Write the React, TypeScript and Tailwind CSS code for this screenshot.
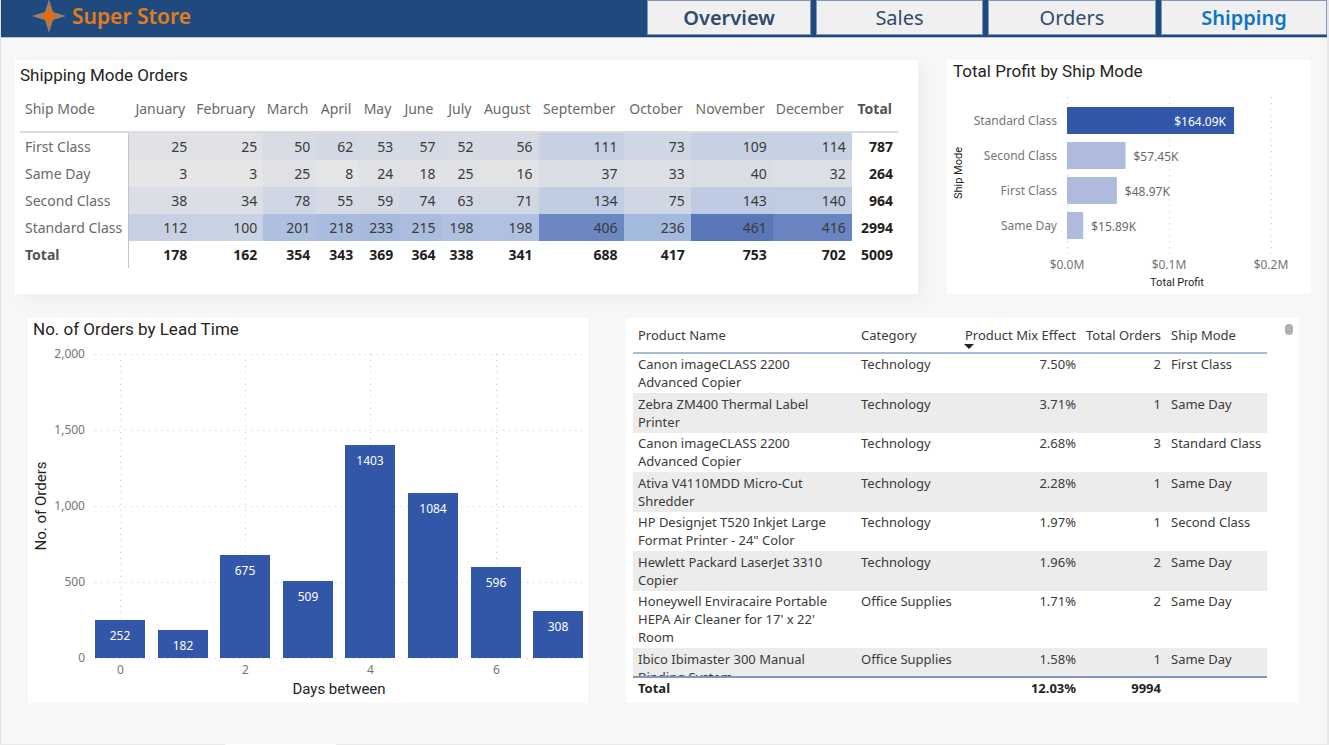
const MONTHS = [
  'January', 'February', 'March', 'April', 'May', 'June', 'July',
  'August', 'September', 'October', 'November', 'December',
];

const MATRIX = [
  { mode: 'First Class', values: [25, 25, 50, 62, 53, 57, 52, 56, 111, 73, 109, 114], total: 787 },
  { mode: 'Same Day', values: [3, 3, 25, 8, 24, 18, 25, 16, 37, 33, 40, 32], total: 264 },
  { mode: 'Second Class', values: [38, 34, 78, 55, 59, 74, 63, 71, 134, 75, 143, 140], total: 964 },
  { mode: 'Standard Class', values: [112, 100, 201, 218, 233, 215, 198, 198, 406, 236, 461, 416], total: 2994 },
];
const MONTH_TOTALS = [178, 162, 354, 343, 369, 364, 338, 341, 688, 417, 753, 702];

const PRODUCTS = [
  ['Canon imageCLASS 2200 Advanced Copier', 'Technology', '7.50%', '2', 'First Class'],
  ['Zebra ZM400 Thermal Label Printer', 'Technology', '3.71%', '1', 'Same Day'],
  ['Canon imageCLASS 2200 Advanced Copier', 'Technology', '2.68%', '3', 'Standard Class'],
  ['Ativa V4110MDD Micro-Cut Shredder', 'Technology', '2.28%', '1', 'Same Day'],
  ['HP Designjet T520 Inkjet Large Format Printer - 24" Color', 'Technology', '1.97%', '1', 'Second Class'],
  ['Hewlett Packard LaserJet 3310 Copier', 'Technology', '1.96%', '2', 'Same Day'],
  ["Honeywell Enviracaire Portable HEPA Air Cleaner for 17' x 22' Room", 'Office Supplies', '1.71%', '2', 'Same Day'],
  ['Ibico Ibimaster 300 Manual Binding System', 'Office Supplies', '1.58%', '1', 'Same Day'],
];

const PROFITS = [
  { mode: 'Standard Class', value: 164.09 },
  { mode: 'Second Class', value: 57.45 },
  { mode: 'First Class', value: 48.97 },
  { mode: 'Same Day', value: 15.89 },
];

const LEAD_TIMES = [252, 182, 675, 509, 1403, 1084, 596, 308];

const HEAT_STOPS: [number, number[]][] = [
  [3, [230, 230, 230]],
  [50, [214, 219, 228]],
  [112, [199, 209, 227]],
  [236, [164, 185, 222]],
  [461, [90, 119, 185]],
];

function heat(value: number) {
  let i = 0;
  while (i < HEAT_STOPS.length - 2 && value > HEAT_STOPS[i + 1][0]) i++;
  const [from, a] = HEAT_STOPS[i];
  const [to, b] = HEAT_STOPS[i + 1];
  const t = (value - from) / (to - from);
  return `rgb(${a.map((c, k) => Math.round(c + (b[k] - c) * t)).join(',')})`;
}

const TITLE = "font-['Roboto',sans-serif] text-[17px] leading-[22px] text-[#252423]";

function Header() {
  const tab = 'flex h-full items-center justify-center border border-[#8198b8] bg-[#f0f0f0] text-[20px] leading-7';
  return (
    <header className="flex h-[38px] items-start justify-between border-b border-[#b3c4da] bg-[#204a7d]">
      <div className="flex h-8 items-center gap-[6px] pl-[31px]">
        <svg viewBox="0 0 34 34" className="h-[34px] w-[34px]" aria-hidden="true">
          <path d="M17 0 L21 13 L34 17 L21 21 L17 34 L13 21 L0 17 L13 13 Z" fill="#858585" />
          <path d="M17 5 L20 14 L29 17 L20 20 L17 29 L14 20 L5 17 L14 14 Z" fill="#e46c0a" />
        </svg>
        <span className="text-[21px] leading-8 font-semibold text-[#e57c1a]">Super Store</span>
      </div>
      <nav className="flex h-[35px] gap-[5px]">
        <a href="#overview" className={`${tab} w-[164px] font-semibold text-[#2f4a6d]`}>Overview</a>
        <a href="#sales" className={`${tab} w-[167px] text-[#2f4a6d]`}>Sales</a>
        <a href="#orders" className={`${tab} w-[168px] text-[#2f4a6d]`}>Orders</a>
        <a href="#shipping" aria-current="page" className={`${tab} w-[166px] font-semibold text-[#0f75c4]`}>Shipping</a>
      </nav>
    </header>
  );
}

function ShippingMatrix() {
  return (
    <section className="bg-white pt-1 pr-5 pb-[26px] pl-[5px] shadow-[6px_6px_12px_rgba(0,0,0,0.04)]">
      <h2 className={TITLE}>Shipping Mode Orders</h2>
      <table className="w-full table-fixed border-separate border-spacing-0 text-right text-sm leading-5 text-[#3b3a39]">
        <colgroup>
          <col className="w-[109px]" />
          <col className="w-[64px]" />
          <col className="w-[70px]" />
          <col className="w-[53px]" />
          <col className="w-[43px]" />
          <col className="w-[40px]" />
          <col className="w-[42px]" />
          <col className="w-[38px]" />
          <col className="w-[59px]" />
          <col className="w-[85px]" />
          <col className="w-[67px]" />
          <col className="w-[82px]" />
          <col className="w-[79px]" />
          <col className="w-[46px]" />
        </colgroup>
        <thead>
          <tr className="h-[47px] text-[#6b6967]">
            <th scope="col" className="border-b-2 border-[#dcdcdc] pl-[5px] text-left font-normal">Ship Mode</th>
            {MONTHS.map((m) => (
              <th key={m} scope="col" className="border-b-2 border-[#dcdcdc] pr-2 font-normal">{m}</th>
            ))}
            <th scope="col" className="border-b-2 border-[#dcdcdc] pr-[6px] font-bold text-[#555351]">Total</th>
          </tr>
        </thead>
        <tbody>
          {MATRIX.map((row) => (
            <tr key={row.mode} className="h-[27px]">
              <th scope="row" className="border-r border-[#c4c4c4] pl-[5px] text-left font-normal whitespace-nowrap text-[#6b6967]">{row.mode}</th>
              {row.values.map((v, i) => (
                <td key={i} className="pr-[6px]" style={{ backgroundColor: heat(v) }}>{v}</td>
              ))}
              <td className="pr-[5px] font-bold text-[#1f1e1d]">{row.total}</td>
            </tr>
          ))}
        </tbody>
        <tfoot>
          <tr className="h-[27px] font-bold text-[#1f1e1d]">
            <th scope="row" className="border-r border-[#c4c4c4] pl-[5px] text-left text-[#555351]">Total</th>
            {MONTH_TOTALS.map((v, i) => (
              <td key={i} className="pr-[6px]">{v}</td>
            ))}
            <td className="pr-[5px]">5009</td>
          </tr>
        </tfoot>
      </table>
    </section>
  );
}

function ProfitChart() {
  return (
    <section className="flex flex-col bg-white">
      <h2 className={`${TITLE} -mb-[22px] pl-[6px]`}>Total Profit by Ship Mode</h2>
      <svg viewBox="0 0 364 234" className="w-full text-[12px]" role="img" aria-label="Total Profit by Ship Mode">
        {[120, 222, 324].map((x) => (
          <line key={x} x1={x + 0.5} x2={x + 0.5} y1="37" y2="195" stroke="#cfcfcf" strokeDasharray="1 5" />
        ))}
        {PROFITS.map((p, i) => {
          const width = p.value * 1.018;
          const y = 47 + i * 35;
          const first = i === 0;
          return (
            <g key={p.mode}>
              <rect x="120" y={y} width={width} height="27" fill={first ? '#3257a8' : '#aebbdd'} />
              <text x="110" y={y + 18} textAnchor="end" fill="#777573">{p.mode}</text>
              <text
                x={first ? 120 + width - 8 : 120 + width + 8}
                y={y + 19}
                textAnchor={first ? 'end' : 'start'}
                fill={first ? '#ffffff' : '#6b6967'}
              >
                {`$${p.value}K`}
              </text>
            </g>
          );
        })}
        {['$0.0M', '$0.1M', '$0.2M'].map((t, i) => (
          <text key={t} x={120 + i * 102} y="209" textAnchor="middle" fill="#777573">{t}</text>
        ))}
        <g className="font-['Roboto',sans-serif] text-[11px]" fill="#252423" textAnchor="middle">
          <text x="230" y="226">Total Profit</text>
          <text transform="translate(15 113) rotate(-90)">Ship Mode</text>
        </g>
      </svg>
    </section>
  );
}

function LeadTimeChart() {
  return (
    <section className="flex flex-col bg-white">
      <h2 className={`${TITLE} -mb-[22px] pl-[5px]`}>No. of Orders by Lead Time</h2>
      <svg viewBox="0 0 560 385" className="w-full text-[12px]" role="img" aria-label="No. of Orders by Lead Time">
        {['0', '500', '1,000', '1,500', '2,000'].map((t, i) => (
          <g key={t}>
            <line x1="67" x2="556" y1={340.5 - i * 76} y2={340.5 - i * 76} stroke="#cfcfcf" strokeDasharray="1 5" />
            <text x="57" y={344 - i * 76} textAnchor="end" fill="#777573">{t}</text>
          </g>
        ))}
        {[0, 2, 4, 6].map((d) => {
          const x = Math.round(92 + d * 62.6);
          return (
            <g key={d}>
              <line x1={x + 0.5} x2={x + 0.5} y1="36" y2="340" stroke="#cfcfcf" strokeDasharray="1 5" />
              <text x={x + 0.5} y="356" textAnchor="middle" fill="#777573">{d}</text>
            </g>
          );
        })}
        {LEAD_TIMES.map((v, i) => {
          const x = Math.round(67 + i * 62.6);
          const y = Math.round(340 - v * 0.152);
          return (
            <g key={i}>
              <rect x={x} y={y} width="50" height={340 - y} fill="#3257a8" />
              <text x={x + 25} y={y + 20} textAnchor="middle" fill="#ffffff">{v}</text>
            </g>
          );
        })}
        <g className="font-['Roboto',sans-serif] text-[15px]" fill="#252423" textAnchor="middle">
          <text x="311" y="376">Days between</text>
          <text transform="translate(18 188) rotate(-90)">No. of Orders</text>
        </g>
      </svg>
    </section>
  );
}

function ProductTable() {
  const head = 'sticky top-0 border-b-2 border-[#a9b9dc] bg-white px-[5px] font-normal whitespace-nowrap';
  const foot = 'sticky bottom-0 border-t-2 border-[#8095c8] bg-white px-[5px] pb-1';
  return (
    <section className="flex justify-between bg-white pr-[6px] pb-px pl-[7px]">
      <div className="h-[384px] w-[634px] overflow-hidden">
        <table className="w-full table-fixed border-separate border-spacing-0 text-left text-[13px] leading-[18px] text-[#3b3a39]">
          <colgroup>
            <col className="w-[223px]" />
            <col className="w-[103px]" />
            <col className="w-[122px]" />
            <col className="w-[85px]" />
            <col className="w-[101px]" />
          </colgroup>
          <thead>
            <tr className="h-9">
              <th scope="col" className={head}>Product Name</th>
              <th scope="col" className={head}>Category</th>
              <th scope="col" aria-sort="descending" className={`${head} text-right`}>
                Product Mix Effect
                <svg viewBox="0 0 10 5" className="absolute bottom-[3px] left-[5px] h-[5px] w-[10px]" aria-hidden="true">
                  <path d="M0 0 H10 L5 5 Z" fill="#252423" />
                </svg>
              </th>
              <th scope="col" className={`${head} text-right`}>Total Orders</th>
              <th scope="col" className={head}>Ship Mode</th>
            </tr>
          </thead>
          <tbody>
            {PRODUCTS.map(([name, category, effect, orders, mode], i) => (
              <tr
                key={i}
                className="align-top odd:bg-white even:bg-[#ececec] odd:*:pt-px odd:*:pb-[2px] even:*:pt-[2px] even:*:pb-[2px]"
              >
                <td className="px-[5px]"><div className="max-w-[200px]">{name}</div></td>
                <td className="px-[5px]">{category}</td>
                <td className="px-[5px] text-right">{effect}</td>
                <td className="px-[5px] text-right">{orders}</td>
                <td className="px-[5px] whitespace-nowrap">{mode}</td>
              </tr>
            ))}
          </tbody>
          <tfoot>
            <tr className="h-[26px] font-bold text-[#252423]">
              <th scope="row" className={foot}>Total</th>
              <td className={foot} />
              <td className={`${foot} text-right`}>12.03%</td>
              <td className={`${foot} text-right`}>9994</td>
              <td className={foot} />
            </tr>
          </tfoot>
        </table>
      </div>
      <div className="mt-[6px] h-[11px] w-2 rounded-full bg-[#b0b0b0]" />
    </section>
  );
}

export default function App() {
  return (
    <div className="flex min-h-screen flex-col bg-[#f7f7f7] font-['Noto_Sans','Open_Sans',sans-serif]">
      <div className="flex grow flex-col border-r-2 border-l border-r-[#e6e6e6] border-l-[#e0e0e0]">
        <Header />
        <main>
          <div className="grid grid-cols-[903fr_364fr] gap-[29px] pt-[22px] pr-4 pl-[14px]">
            <ShippingMatrix />
            <ProfitChart />
          </div>
          <div className="grid grid-cols-[560fr_673fr] gap-[38px] pt-6 pr-7 pb-8 pl-[27px]">
            <LeadTimeChart />
            <ProductTable />
          </div>
        </main>
      </div>
      <footer className="flex h-px bg-[#e9e9e9] pl-[225px]">
        <div className="w-[111px] bg-white" />
      </footer>
    </div>
  );
}
